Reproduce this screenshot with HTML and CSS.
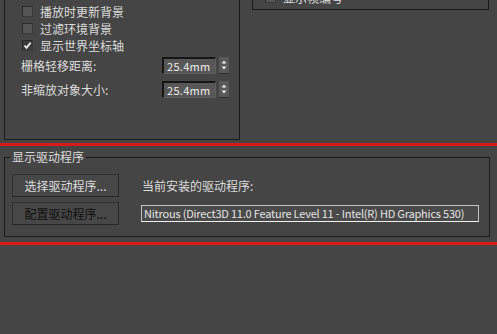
FILE: index.html
```html
<!DOCTYPE html>
<html lang="zh-CN">
<head>
    <meta charset="UTF-8">
    <title>视口参数</title>
    <link rel="stylesheet" href="styles.css">
</head>
<body>
    <div class="top">
        <div class="panel panel-left">
            <label class="check-row"><span class="box"></span>播放时更新背景</label>
            <label class="check-row"><span class="box"></span>过滤环境背景</label>
            <label class="check-row"><span class="box checked">
                <svg viewBox="0 0 11 11" width="11" height="11"><path d="M2.5 5.5 L4.5 7.8 L8.6 2.6" fill="none" stroke="#f0f0f0" stroke-width="1.7"/></svg>
            </span>显示世界坐标轴</label>

            <div class="spin-row first">
                <span class="spin-label">栅格轻移距离:</span>
                <span class="spin-field">25.4mm</span>
                <span class="spin-btn">
                    <svg viewBox="0 0 10 16" width="10" height="16"><path d="M5 3.5 L7.5 6.5 L2.5 6.5 Z M5 12.5 L7.5 9.5 L2.5 9.5 Z" fill="#e8e8e8"/></svg>
                </span>
            </div>
            <div class="spin-row">
                <span class="spin-label">非缩放对象大小:</span>
                <span class="spin-field">25.4mm</span>
                <span class="spin-btn">
                    <svg viewBox="0 0 10 16" width="10" height="16"><path d="M5 3.5 L7.5 6.5 L2.5 6.5 Z M5 12.5 L7.5 9.5 L2.5 9.5 Z" fill="#e8e8e8"/></svg>
                </span>
            </div>
        </div>

        <div class="panel panel-right">
            <label class="check-row"><span class="box"></span>显示帧编号</label>
        </div>
    </div>

    <div class="red-line first-line"></div>

    <fieldset class="driver-group">
        <legend>显示驱动程序</legend>
        <div class="driver-grid">
            <button class="btn">选择驱动程序...</button>
            <span class="driver-label">当前安装的驱动程序:</span>
            <button class="btn dim">配置驱动程序...</button>
            <span class="driver-field">Nitrous (Direct3D 11.0 Feature Level 11 - Intel(R) HD Graphics 530)</span>
        </div>
    </fieldset>

    <div class="red-line second-line"></div>
</body>
</html>
```

FILE: styles.css
```css
body {
    margin: 0;
    background: #454545;
    color: #dcdcdc;
    font-family: "Noto Sans CJK SC", "Liberation Sans", sans-serif;
    font-size: 12px;
    height: 334px;
    overflow: hidden;
}

/* 上半部分: 被截掉顶部的两个面板 */
.top {
    display: flex;
    align-items: flex-start;
    margin-top: -40px;
    padding-left: 4px;
}

.panel {
    box-sizing: border-box;
    border: 1px solid #1b1b1b;
}

.panel-left {
    width: 236px;
    height: 180px;
    padding: 42px 0 0 16px;
}

.panel-right {
    width: 237px;
    height: 50px;
    margin-left: 12px;
    padding: 28px 0 0 12px;
}

.check-row {
    display: flex;
    align-items: center;
    height: 17px;
    line-height: 17px;
    white-space: nowrap;
}

.panel-left .check-row {
    padding-left: 1px;
}

.box {
    box-sizing: border-box;
    width: 11px;
    height: 11px;
    margin-right: 7px;
    background: #555;
    border: 1px solid #2a2a2a;
    border-right-color: #3a3a3a;
    border-bottom-color: #3a3a3a;
    display: flex;
}

.box.checked {
    background: #3c3c3c;
}

.box svg {
    margin: -1px;
}

.spin-row {
    display: flex;
    align-items: center;
    height: 17px;
    margin-top: 7px;
}

.spin-row.first {
    margin-top: 3px;
}

.spin-label {
    width: 141px;
    white-space: nowrap;
}

.spin-field {
    box-sizing: border-box;
    width: 54px;
    height: 17px;
    padding-left: 3px;
    font-size: 11px;
    line-height: 15px;
    letter-spacing: 0.3px;
    background: #575757;
    color: #eee;
    border: 1px solid #5f5f5f;
    border-top: 2px solid #161616;
    border-left: 2px solid #161616;
}

.spin-btn {
    display: flex;
    margin-left: 3px;
    width: 10px;
    height: 16px;
    background: #5a5a5a;
    border-bottom: 1px solid #2c2c2c;
}

.red-line {
    height: 3px;
    background: #d81a1a;
}

.first-line {
    margin-top: 3px;
}

.second-line {
    margin-top: 5px;
}

/* 显示驱动程序 */
.driver-group {
    box-sizing: border-box;
    height: 88px;
    margin: 3px 7px 0 4px;
    padding: 9px 0 0 7px;
    border: 1px solid #1b1b1b;
}

.driver-group legend {
    padding: 0 2px;
    margin-left: -2px;
    line-height: 16px;
    color: #dcdcdc;
}

.driver-grid {
    display: grid;
    grid-template-columns: 107px 338px;
    grid-template-rows: 23px 23px;
    column-gap: 22px;
    row-gap: 5px;
    align-items: center;
}

.btn {
    height: 23px;
    padding: 0;
    font-family: inherit;
    font-size: 12px;
    color: #dcdcdc;
    background: #474747;
    border: 1px solid #262626;
    border-top-color: #303030;
    border-left-color: #303030;
}

.btn.dim {
    color: #101010;
}

.driver-label {
    padding-left: 1px;
}

.driver-field {
    box-sizing: border-box;
    height: 17px;
    line-height: 15px;
    padding-left: 2px;
    font-size: 11px;
    letter-spacing: -0.2px;
    background: #4a4a4a;
    color: #e4e4e4;
    border: 1px solid #c4c4c4;
    border-bottom-color: #f0f0f0;
    white-space: nowrap;
    overflow: hidden;
}
```
